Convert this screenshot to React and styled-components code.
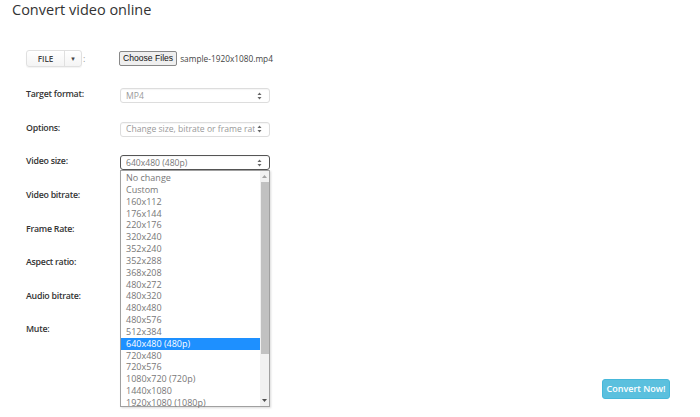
import React from "react";
import styled, { createGlobalStyle } from "styled-components";

const GlobalStyle = createGlobalStyle`
    html, body {
        margin: 0;
        background: #fff;
    }
    body {
        font-family: "Open Sans", "DejaVu Sans", sans-serif;
        color: #333;
    }
`;

const Page = styled.div`
    width: 700px;
    height: 417px;
    padding: 0 12px;
    box-sizing: border-box;
    position: relative;
`;

const Title = styled.h1`
    margin: 0;
    font-size: 14.5px;
    line-height: 20px;
    font-weight: 400;
    color: #333;
`;

const Form = styled.div`
    margin-top: 21px;
    padding-left: 14px;
`;

const Row = styled.div`
    display: flex;
    align-items: center;
    height: ${(p) => p.$height || 33.6}px;
`;

const FileRow = styled(Row)`
    box-sizing: border-box;
    height: 38px;
    padding-bottom: 4px;
`;

const Label = styled.div`
    width: 94px;
    font-size: 8.8px;
    font-weight: 600;
    letter-spacing: -0.25px;
    color: #333;
    padding-bottom: 3px;
`;

const SplitButton = styled.div`
    display: flex;
    height: 15px;
    border: 1px solid #e0e0e0;
    border-radius: 3px;
    background: linear-gradient(#fff, #f4f4f4);
    box-shadow: 0 1px 1px rgba(0, 0, 0, 0.05);
`;

const SplitMain = styled.div`
    width: 37px;
    display: flex;
    align-items: center;
    justify-content: center;
    font-size: 8px;
    font-weight: 600;
    color: #444;
    border-right: 1px solid #e0e0e0;
`;

const SplitCaret = styled.div`
    width: 16px;
    display: flex;
    align-items: center;
    justify-content: center;
    font-size: 7px;
    color: #444;
`;

const Colon = styled.span`
    font-size: 9px;
    color: #999;
    margin-left: 1px;
    width: 36px;
`;

const FileLine = styled.div`
    display: flex;
    align-items: center;
    gap: 3px;
`;

const ChooseButton = styled.div`
    height: 13px;
    padding: 0 3px;
    display: flex;
    align-items: center;
    font-family: "Liberation Sans", Arial, sans-serif;
    font-size: 8.6px;
    color: #111;
    background: #efefef;
    border: 1px solid #888;
    border-radius: 2px;
`;

const FileName = styled.span`
    font-size: 8.3px;
    color: #444;
`;

const SelectWrap = styled.div`
    position: relative;
    width: 150px;
`;

const SelectBox = styled.div`
    height: 15px;
    box-sizing: border-box;
    border: 1px solid ${(p) => (p.$focused ? "#555" : "#ddd")};
    border-radius: 3px;
    display: flex;
    align-items: center;
    justify-content: space-between;
    gap: 2px;
    padding: 0 7px 0 5px;
    font-size: 8.6px;
    color: ${(p) => (p.$focused ? "#777" : "#999")};
    background: #fff;
    box-shadow: inset 0 1px 1px rgba(0, 0, 0, 0.04);
    white-space: nowrap;
    overflow: hidden;
`;

const SelectText = styled.span`
    overflow: hidden;
    flex: 1;
`;

const DropList = styled.div`
    position: absolute;
    top: 15px;
    left: 0;
    width: 150px;
    height: 237px;
    box-sizing: border-box;
    border: 1px solid #a0a0a0;
    background: #fff;
    display: flex;
    z-index: 5;
    box-shadow: 1px 1px 2px rgba(0, 0, 0, 0.15);
`;

const Options = styled.div`
    flex: 1;
    display: flex;
    flex-direction: column;
    padding-top: 0.5px;
`;

const Option = styled.div`
    height: 11.85px;
    line-height: 11.85px;
    padding-left: 5px;
    font-size: 9px;
    color: ${(p) => (p.$active ? "#fff" : "#777")};
    background: ${(p) => (p.$active ? "#1e90ff" : "transparent")};
`;

const Scrollbar = styled.div`
    width: 9px;
    background: #f1f1f1;
    display: flex;
    flex-direction: column;
    align-items: center;
`;

const ScrollArrow = styled.div`
    height: 11px;
    display: flex;
    align-items: center;
    justify-content: center;
`;

const ScrollThumb = styled.div`
    width: 8px;
    height: 172px;
    background: #c1c1c1;
`;

const Spacer = styled.div`
    flex: 1;
`;

const Footer = styled.div`
    display: flex;
    justify-content: flex-end;
    padding-right: 18px;
    margin-top: 31px;
`;

const ConvertButton = styled.div`
    width: 68px;
    height: 20px;
    box-sizing: border-box;
    display: flex;
    align-items: center;
    justify-content: center;
    background: #5bc0de;
    border: 1px solid #46b8da;
    border-radius: 3px;
    color: #fff;
    font-size: 9px;
    font-weight: 600;
`;

const Arrows = () => (
    <svg width="5" height="8" viewBox="0 0 5 8">
        <path d="M2.5 0.5 L4.5 3 L0.5 3 Z" fill="#666" />
        <path d="M2.5 7.5 L4.5 5 L0.5 5 Z" fill="#666" />
    </svg>
);

const sizes = [
    "No change", "Custom", "160x112", "176x144", "220x176", "320x240",
    "352x240", "352x288", "368x208", "480x272", "480x320", "480x480",
    "480x576", "512x384", "640x480 (480p)", "720x480", "720x576",
    "1080x720 (720p)", "1440x1080", "1920x1080 (1080p)",
];

// these rows sit under the open list, so their values are not shown
const hiddenRows = ["Video bitrate:", "Frame Rate:", "Aspect ratio:", "Audio bitrate:", "Mute:"];

function Select({ value, focused, children }) {
    return (
        <SelectWrap>
            <SelectBox $focused={focused}>
                <SelectText>{value}</SelectText>
                <Arrows />
            </SelectBox>
            {children}
        </SelectWrap>
    );
}

export default function App() {
    return (
        <Page>
            <GlobalStyle />
            <Title>Convert video online</Title>
            <Form>
                <FileRow>
                    <SplitButton>
                        <SplitMain>FILE</SplitMain>
                        <SplitCaret>▾</SplitCaret>
                    </SplitButton>
                    <Colon>:</Colon>
                    <FileLine>
                        <ChooseButton>Choose Files</ChooseButton>
                        <FileName>sample-1920x1080.mp4</FileName>
                    </FileLine>
                </FileRow>
                <Row>
                    <Label>Target format:</Label>
                    <Select value="MP4" />
                </Row>
                <Row>
                    <Label>Options:</Label>
                    <Select value="Change size, bitrate or frame rate" />
                </Row>
                <Row>
                    <Label>Video size:</Label>
                    <Select value="640x480 (480p)" focused>
                        <DropList>
                            <Options>
                                {sizes.map((s) => (
                                    <Option key={s} $active={s === "640x480 (480p)"}>{s}</Option>
                                ))}
                            </Options>
                            <Scrollbar>
                                <ScrollArrow>
                                    <svg width="5" height="3" viewBox="0 0 5 3"><path d="M2.5 0 L5 3 L0 3 Z" fill="#a3a3a3" /></svg>
                                </ScrollArrow>
                                <ScrollThumb />
                                <Spacer />
                                <ScrollArrow>
                                    <svg width="5" height="3" viewBox="0 0 5 3"><path d="M0 0 L5 0 L2.5 3 Z" fill="#505050" /></svg>
                                </ScrollArrow>
                            </Scrollbar>
                        </DropList>
                    </Select>
                </Row>
                {hiddenRows.map((label) => (
                    <Row key={label}>
                        <Label>{label}</Label>
                        <Select value="" />
                    </Row>
                ))}
            </Form>
            <Footer>
                <ConvertButton>Convert Now!</ConvertButton>
            </Footer>
        </Page>
    );
}
